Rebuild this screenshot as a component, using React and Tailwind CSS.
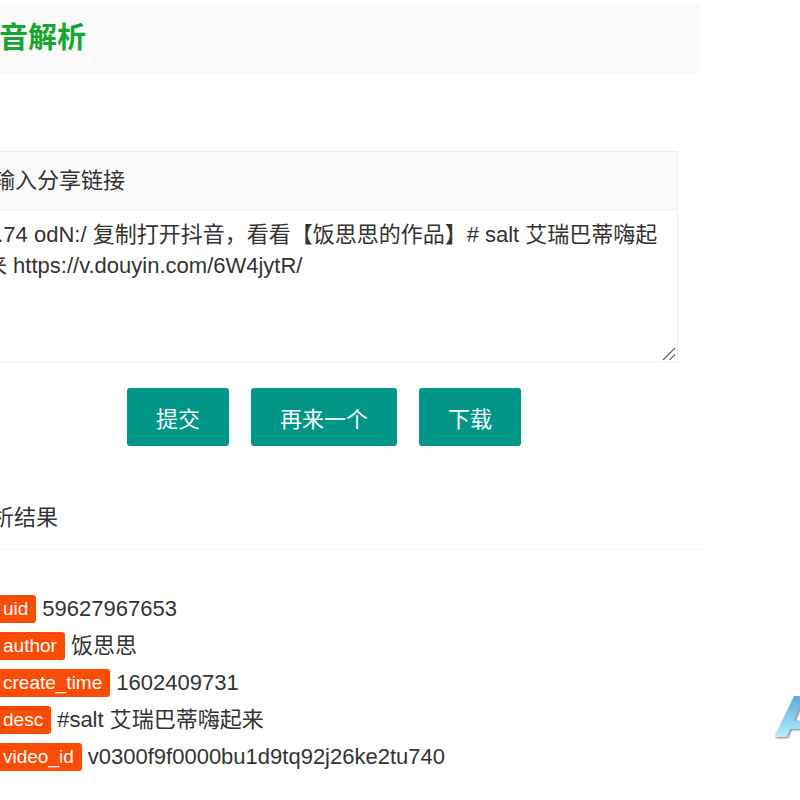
import { useState } from "react";

const SHARE_TEXT =
  "5.74 odN:/ 复制打开抖音，看看【饭思思的作品】# salt 艾瑞巴蒂嗨起来 https://v.douyin.com/6W4jytR/";

const RESULT = [
  { key: "uid", value: "59627967653" },
  { key: "author", value: "饭思思" },
  { key: "create_time", value: "1602409731" },
  { key: "desc", value: "#salt 艾瑞巴蒂嗨起来" },
  { key: "video_id", value: "v0300f9f0000bu1d9tq92j26ke2tu740" },
];

function ActionButton({ children, ...props }) {
  return (
    <button
      type="button"
      className="h-[58px] px-[29px] pt-1 rounded-[3px] bg-[#009688] text-white whitespace-nowrap hover:opacity-80"
      {...props}
    >
      {children}
    </button>
  );
}

export default function App() {
  const [text, setText] = useState(SHARE_TEXT);

  return (
    <div className="relative min-h-screen overflow-hidden bg-white pt-1 pr-24 font-['Liberation_Sans','Noto_Sans_CJK_SC',sans-serif] text-[22px] text-[#333]">
      <main className="-ml-[30px]">
        <header className="mr-1 flex h-[70px] items-center bg-[#fafafa]">
          <h1 className="text-[29px] font-bold text-[#16a52f]">抖音解析</h1>
        </header>

        <form className="mt-[77px] mr-[26px]" onSubmit={(e) => e.preventDefault()}>
          <div className="relative border border-[#eee]">
            <label htmlFor="share" className="flex h-[58px] items-center border-b border-[#eee] bg-[#fafafa]">
              请输入分享链接
            </label>
            <textarea
              id="share"
              value={text}
              onChange={(e) => setText(e.target.value)}
              className="block h-[152px] w-full resize-none py-[9px] pr-4 pl-[14px] leading-[31px] outline-none"
            />
            <svg
              viewBox="0 0 14 14"
              className="pointer-events-none absolute right-px bottom-px size-[14px]"
              stroke="#666"
              strokeWidth="1.2"
            >
              <path d="M1 13 13 1M7.500 13 13 7.500" />
            </svg>
          </div>

          <div className="mt-[25px] flex justify-center gap-[22px]">
            <ActionButton>提交</ActionButton>
            <ActionButton onClick={() => setText("")}>再来一个</ActionButton>
            <ActionButton>下载</ActionButton>
          </div>
        </form>

        <section className="mt-[38px]">
          <h2 className="flex h-[66px] items-center border-b border-[#f6f6f6] pt-[2px]">解析结果</h2>
          <dl className="mt-10 pl-6">
            {RESULT.map((item) => (
              <div key={item.key} className="flex h-[37px] items-center gap-[6px]">
                <dt className="h-7 rounded-[3px] bg-[#fb4c05] pr-2 pl-[9px] text-[19px] leading-7 text-white">
                  {item.key}
                </dt>
                <dd>{item.value}</dd>
              </div>
            ))}
          </dl>
        </section>
      </main>

      {/* floating site mark */}
      <a
        href="#top"
        className="absolute top-[685px] -right-5 bg-linear-to-b from-[#5aaede] from-20% to-[#b5ecfa] to-80% bg-clip-text font-['Inter',sans-serif] text-[56px] leading-[64px] font-black text-transparent italic drop-shadow-[1px_1px_1px_#777]"
      >
        A
      </a>
    </div>
  );
}
